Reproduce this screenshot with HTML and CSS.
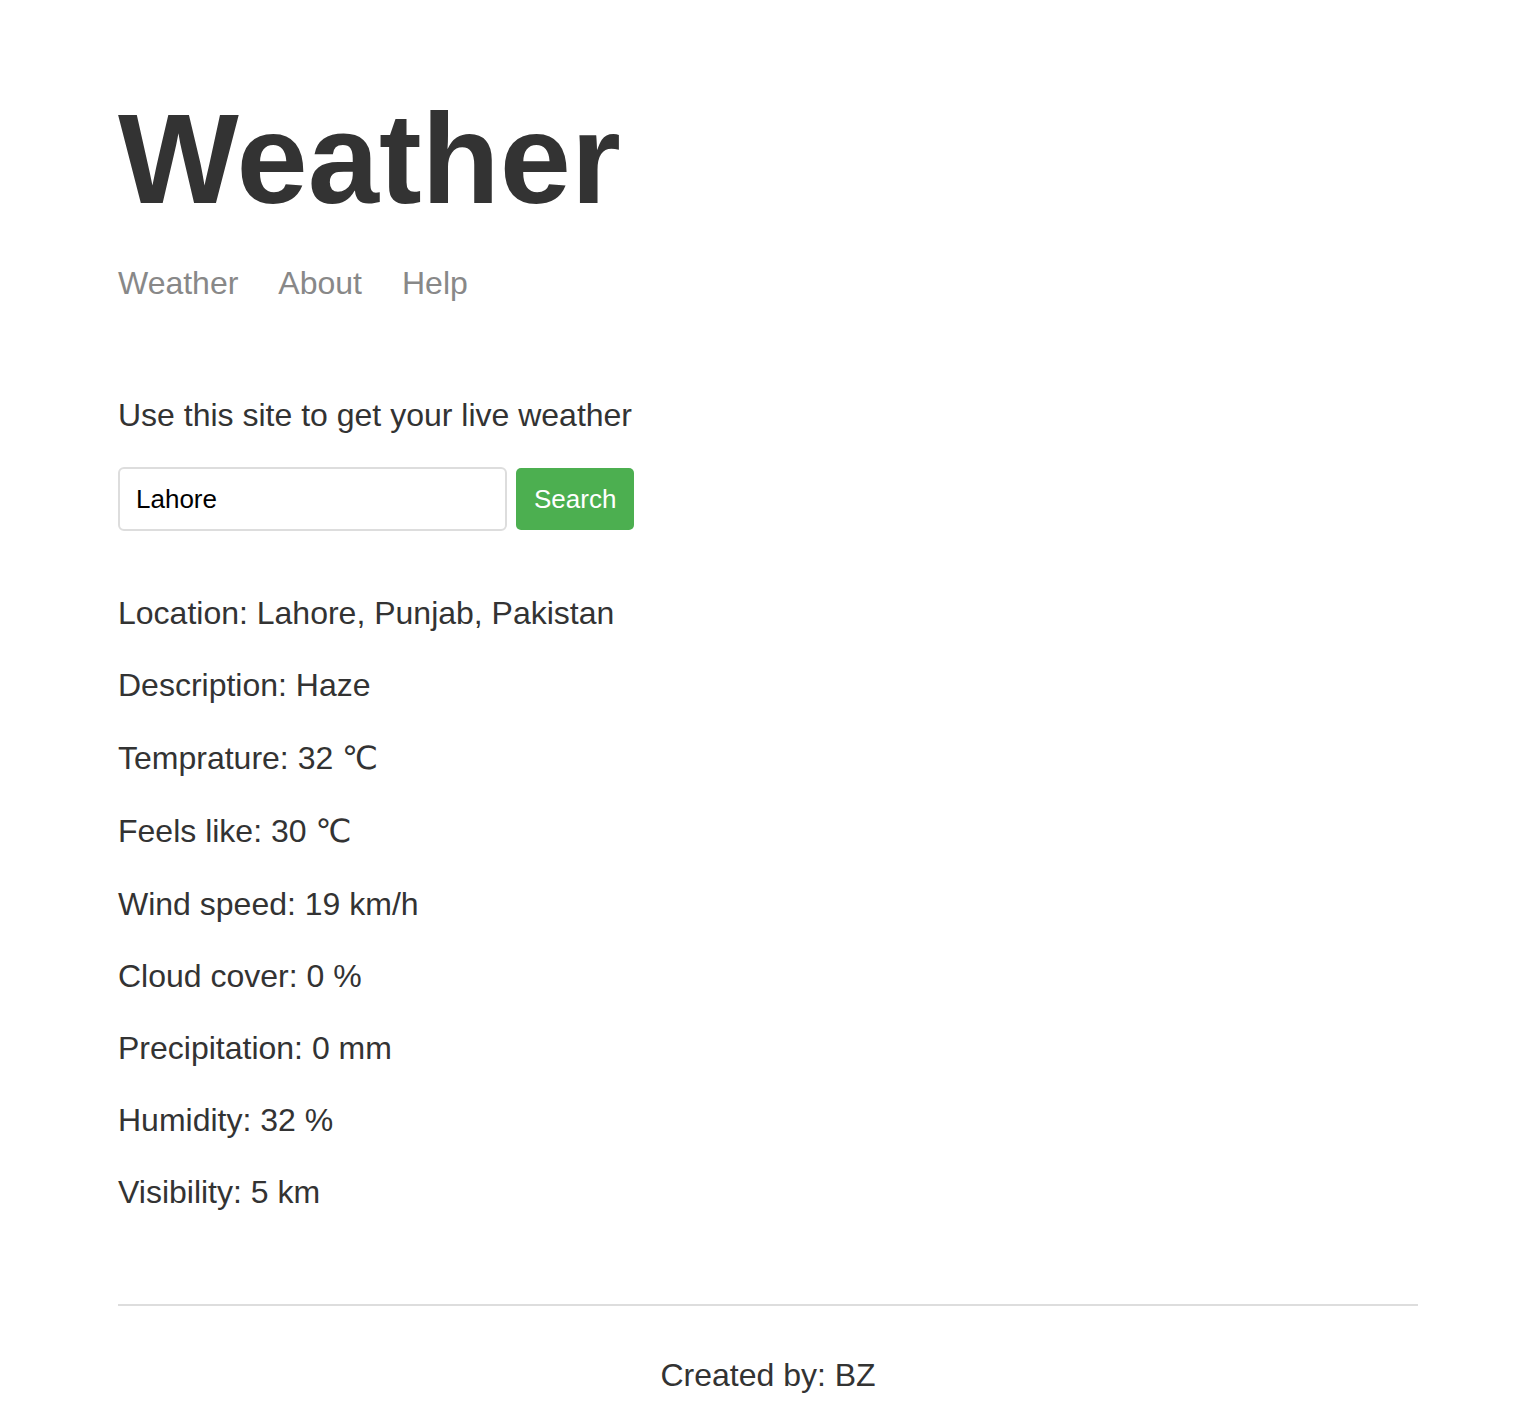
FILE: index.html
```html
<!DOCTYPE html>
<html lang="en">
<head>
<meta charset="utf-8">
<title>Weather</title>
<link rel="stylesheet" href="styles.css">
</head>
<body>
<div class="main-content">
  <header class="header">
    <h1 class="title">Weather</h1>
    <nav class="nav">
      <a href="#" class="nav-link">Weather</a>
      <a href="#" class="nav-link">About</a>
      <a href="#" class="nav-link">Help</a>
    </nav>
  </header>
  <main class="main">
    <p class="intro">Use this site to get your live weather</p>
    <form class="search-form">
      <input class="search-input" type="text" value="Lahore">
      <button class="search-button" type="button">Search</button>
    </form>
    <div class="results">
      <p class="result">Location: Lahore, Punjab, Pakistan</p>
      <p class="result">Description: Haze</p>
      <p class="result">Temprature: 32 <span class="unit">℃</span></p>
      <p class="result">Feels like: 30 <span class="unit">℃</span></p>
      <p class="result">Wind speed: 19 km/h</p>
      <p class="result">Cloud cover: 0 %</p>
      <p class="result">Precipitation: 0 mm</p>
      <p class="result">Humidity: 32 %</p>
      <p class="result">Visibility: 5 km</p>
    </div>
  </main>
  <footer class="footer">
    <p class="credit">Created by: BZ</p>
  </footer>
</div>
</body>
</html>
```
FILE: styles.css
```css
html, body {
  margin: 0;
  padding: 0;
  background: #ffffff;
}

body {
  font-family: "Liberation Sans", Arial, sans-serif;
  color: #333333;
  font-size: 32px;
}

.main-content {
  max-width: 1300px;
  margin: 0 auto;
  padding-top: 85px;
}

.title {
  margin: 0;
  font-size: 128px;
  font-weight: bold;
  line-height: normal;
  color: #333333;
}

.nav {
  display: flex;
  gap: 40px;
  margin-top: 32.5px;
}

.nav-link {
  color: #888888;
  text-decoration: none;
  font-size: 32px;
}

.main {
  margin-top: 95.2px;
}

.intro {
  margin: 0 0 33.7px 0;
}

.search-form {
  display: flex;
  align-items: center;
  gap: 9px;
  margin: 0;
}

.search-input {
  box-sizing: border-box;
  width: 389px;
  height: 64px;
  padding: 0 16px;
  border: 2px solid #dddddd;
  border-radius: 6px;
  font-family: "Liberation Sans", Arial, sans-serif;
  font-size: 26px;
  color: #000000;
  outline: none;
}

.search-button {
  box-sizing: border-box;
  height: 62px;
  padding: 0 18px;
  border: none;
  border-radius: 5px;
  background: #4caf50;
  color: #ffffff;
  font-family: "Liberation Sans", Arial, sans-serif;
  font-size: 26px;
  cursor: pointer;
}

.results {
  display: flex;
  flex-direction: column;
  gap: 35.2px;
  margin-top: 63.5px;
}

.result {
  margin: 0;
}

.unit {
  font-family: "DejaVu Sans", sans-serif;
}

.footer {
  margin-top: 93px;
  border-top: 2px solid #dddddd;
  padding-top: 51px;
  padding-bottom: 32px;
  text-align: center;
}

.credit {
  margin: 0;
}
```
